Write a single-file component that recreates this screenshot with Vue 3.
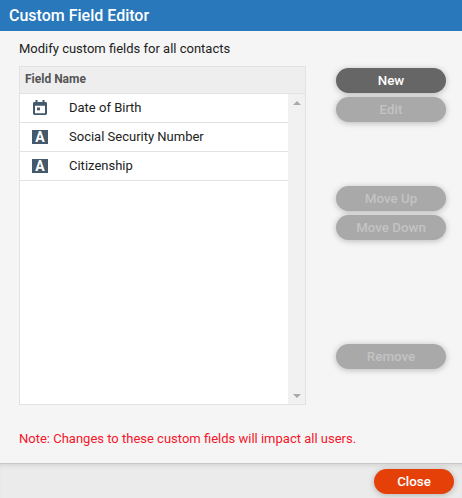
<script setup>
const fields = [
  { name: 'Date of Birth', type: 'date' },
  { name: 'Social Security Number', type: 'text' },
  { name: 'Citizenship', type: 'text' }
]
</script>

<template>
  <div class="dialog">
    <header class="title-bar">Custom Field Editor</header>

    <main class="body">
      <p class="hint">Modify custom fields for all contacts</p>

      <div class="columns">
        <div class="grid">
          <div class="grid-head">Field Name</div>
          <div class="grid-body">
            <div class="rows">
              <div v-for="field in fields" :key="field.name" class="row">
                <span class="row-icon">
                  <svg v-if="field.type === 'date'" width="14" height="15" viewBox="1 0 14 16" preserveAspectRatio="none">
                    <path fill="#44596b" d="M3.500 0h2v2h5V0h2v2h1A1.500 1.500 0 0 1 15 3.500v11a1.500 1.500 0 0 1-1.500 1.500h-11A1.500 1.500 0 0 1 1 14.500v-11A1.500 1.500 0 0 1 2.500 2h1zM3 6v8h10V6z" />
                    <rect x="5" y="8" width="3" height="3" fill="#44596b" />
                  </svg>
                  <span v-else class="type-a">A</span>
                </span>
                <span class="row-name">{{ field.name }}</span>
              </div>
            </div>
            <div class="scrollbar">
              <span class="arrow up"></span>
              <span class="arrow down"></span>
            </div>
          </div>
        </div>

        <div class="actions">
          <div class="group group-top">
            <button class="btn btn-dark">New</button>
            <button class="btn" disabled>Edit</button>
          </div>
          <div class="group group-move">
            <button class="btn" disabled>Move Up</button>
            <button class="btn" disabled>Move Down</button>
          </div>
          <div class="group group-remove">
            <button class="btn" disabled>Remove</button>
          </div>
        </div>
      </div>

      <p class="note">Note: Changes to these custom fields will impact all users.</p>
    </main>

    <footer class="footer">
      <button class="btn btn-close">Close</button>
    </footer>
  </div>
</template>

<style>
html,
body {
  margin: 0;
  background: #f5f5f5;
}
</style>

<style scoped>
.dialog {
  width: 462px;
  height: 498px;
  display: flex;
  flex-direction: column;
  background: #f5f5f5;
  font-family: Roboto, sans-serif;
  overflow: hidden;
}

.title-bar {
  height: 31px;
  padding-left: 9px;
  background: #2878bb;
  color: #fff;
  font-size: 16px;
  font-weight: 500;
  line-height: 31px;
}

.body {
  flex: 1;
  display: flex;
  flex-direction: column;
  padding: 0 16px 0 19px;
  min-height: 0;
}

.hint {
  margin: 9px 0 0;
  height: 26px;
  font-size: 13px;
  line-height: 17px;
  color: #222;
}

.columns {
  display: flex;
  gap: 30px;
}

.grid {
  box-sizing: border-box;
  width: 287px;
  height: 339px;
  display: flex;
  flex-direction: column;
  border: 1px solid #e2e2e2;
  background: #fff;
}

.grid-head {
  box-sizing: border-box;
  height: 27px;
  padding-left: 5px;
  background: #eeeeee;
  border-bottom: 1px solid #e2e2e2;
  color: #555;
  font-size: 12px;
  font-weight: 700;
  line-height: 25px;
}

.grid-body {
  flex: 1;
  display: flex;
  min-height: 0;
}

.rows {
  flex: 1;
}

.row {
  box-sizing: border-box;
  height: 29px;
  display: flex;
  align-items: center;
  padding-bottom: 2px;
  border-bottom: 1px solid #e2e2e2;
}

.row-icon {
  box-sizing: border-box;
  width: 49px;
  align-self: flex-start;
  display: flex;
  justify-content: center;
  padding: 6px 9px 0 0;
}

.row-name {
  font-size: 13px;
  color: #222;
}

.type-a {
  width: 16px;
  height: 14px;
  margin-top: 1px;
  background: #44596b;
  color: #fff;
  font-size: 14px;
  font-weight: 700;
  line-height: 15px;
  text-align: center;
}

.scrollbar {
  width: 17px;
  display: flex;
  flex-direction: column;
  justify-content: space-between;
  align-items: center;
  padding: 7px 0 6px;
  background: #f1f1f1;
}

.arrow {
  width: 0;
  height: 0;
  border-left: 4px solid transparent;
  border-right: 4px solid transparent;
}

.arrow.up {
  border-bottom: 4px solid #a9a9a9;
}

.arrow.down {
  border-top: 4px solid #a9a9a9;
}

.actions {
  width: 110px;
  display: flex;
  flex-direction: column;
}

.group {
  display: flex;
  flex-direction: column;
  gap: 4px;
}

.group-top {
  margin-top: 2px;
}

.group-move {
  margin-top: 64px;
}

.group-remove {
  margin-top: 104px;
}

.btn {
  width: 110px;
  height: 25px;
  padding: 0 0 1px;
  border: none;
  border-radius: 12.5px;
  background: #a9a9a9;
  color: #c3c3c3;
  font-family: Roboto, sans-serif;
  font-size: 13.33px;
  font-weight: 500;
  box-shadow: 0 1px 6px rgba(0, 0, 0, 0.25);
}

.btn-dark {
  background: #666;
  color: #fff;
}

.note {
  margin: 25px 0 0;
  font-size: 13px;
  line-height: 17px;
  color: #f5152b;
}

.footer {
  box-sizing: border-box;
  height: 35px;
  display: flex;
  justify-content: flex-end;
  padding: 5px 8px 0 0;
  background: #ebebeb;
  border-top: 1px solid #c8c8c8;
  box-shadow: inset 0 4px 5px -3px rgba(0, 0, 0, 0.12);
}

.btn-close {
  width: 80px;
  background: #e54008;
  color: #fff;
}
</style>
